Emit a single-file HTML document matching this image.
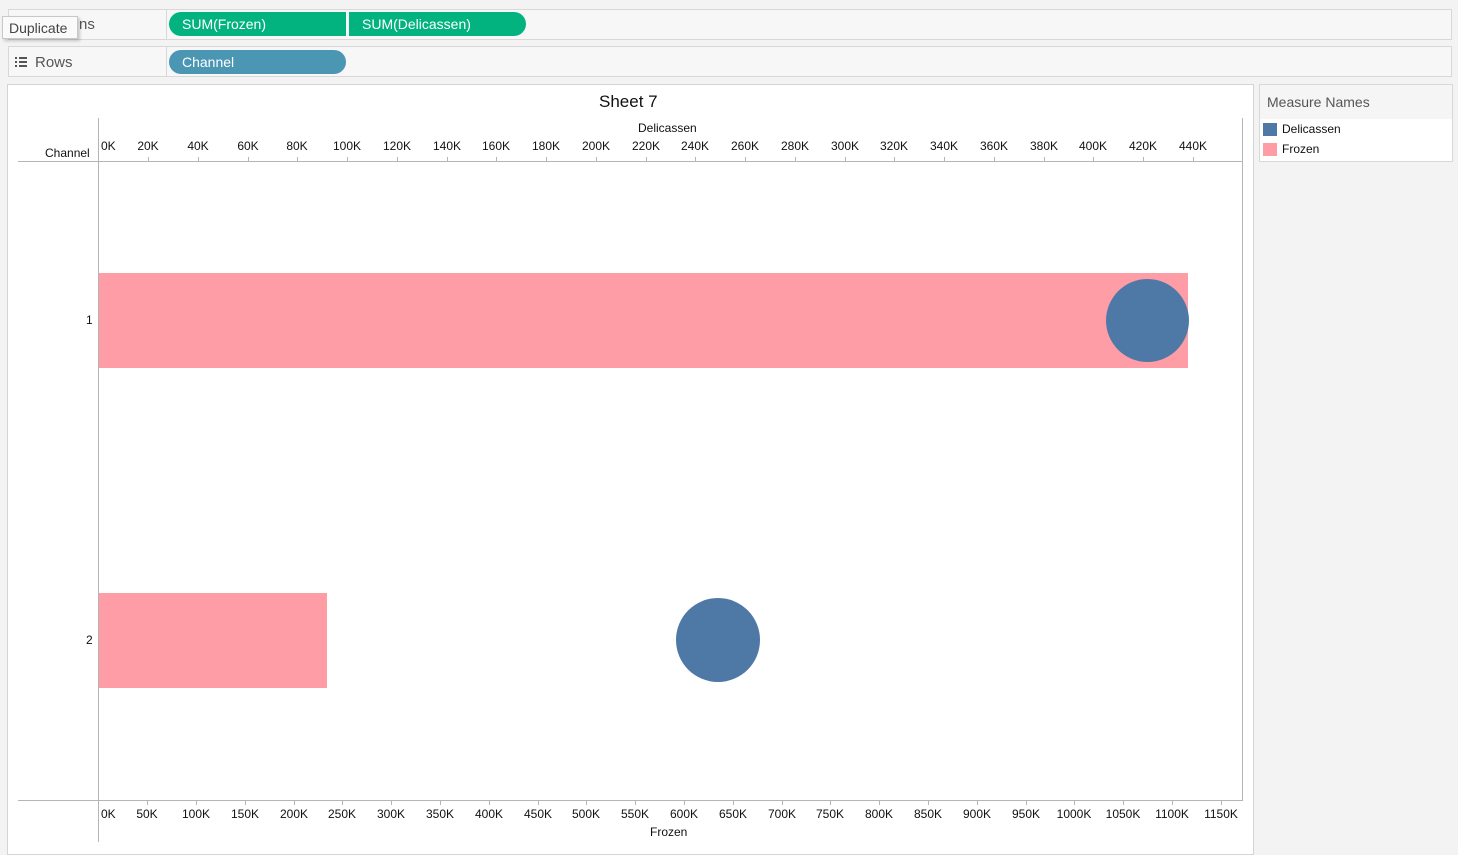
<!DOCTYPE html>
<html><head><meta charset="utf-8"><style>
body{margin:0;width:1458px;height:855px;background:#f3f3f3;font-family:"Liberation Sans",sans-serif;position:relative;overflow:hidden}
.a{position:absolute}
.t{position:absolute;font-size:12px;color:#111;transform:translateX(-50%);white-space:nowrap}
.tk{position:absolute;width:1px;height:4px;background:#b5b5b5}
.pill{position:absolute;height:24px;border-radius:12px;color:#fff;font-size:14px;line-height:24px;padding-left:13px;box-sizing:border-box}
.ln{position:absolute;left:15px;width:12px;height:2px;background:#555}
.dt{position:absolute;left:15px;width:2px;height:2px;background:#555}
</style></head><body>
<div class="a" style="left:8px;top:9px;width:1442px;height:29px;border:1px solid #d8d8d8;background:#f7f7f7"></div>
<div class="a" style="left:166px;top:9px;width:1px;height:31px;background:#d8d8d8"></div>
<div class="a" style="left:8px;top:46px;width:1442px;height:29px;border:1px solid #d8d8d8;background:#f7f7f7"></div>
<div class="a" style="left:166px;top:46px;width:1px;height:31px;background:#d8d8d8"></div>
<div class="a" style="left:79px;top:16px;font-size:15px;color:#555">ns</div>
<div class="a" style="left:2px;top:16px;width:76px;height:23px;background:#fafafa;border:1px solid #c8c8c8;box-shadow:2px 2px 3px rgba(0,0,0,.2);font-size:14px;color:#444;line-height:23px;padding-left:6px;box-sizing:border-box">Duplicate</div>
<div class="a" style="left:15px;top:57px;width:2px;height:2px;background:#555"></div>
<div class="a" style="left:19px;top:57px;width:8px;height:2px;background:#555"></div>
<div class="a" style="left:15px;top:61px;width:2px;height:2px;background:#555"></div>
<div class="a" style="left:19px;top:61px;width:8px;height:2px;background:#555"></div>
<div class="a" style="left:15px;top:65px;width:2px;height:2px;background:#555"></div>
<div class="a" style="left:19px;top:65px;width:8px;height:2px;background:#555"></div>
<div class="a" style="left:35px;top:54px;font-size:15px;color:#555">Rows</div>
<div class="pill" style="left:169px;top:12px;width:177px;background:#02b37f;border-radius:12px 0 0 12px">SUM(Frozen)</div>
<div class="pill" style="left:349px;top:12px;width:177px;background:#02b37f;border-radius:0 12px 12px 0">SUM(Delicassen)</div>
<div class="pill" style="left:169px;top:50px;width:177px;background:#4a96b3">Channel</div>

<div class="a" style="left:7px;top:84px;width:1245px;height:769px;background:#fff;border:1px solid #d4d4d4"></div>
<div class="a" style="left:1259px;top:84px;width:192px;height:76px;background:#fff;border:1px solid #d8d8d8"></div>
<div class="a" style="left:1260px;top:85px;width:192px;height:34px;background:#f5f5f5"></div>
<div class="a" style="left:1267px;top:94px;font-size:14px;color:#555">Measure Names</div>
<div class="a" style="left:1263px;top:123px;width:14px;height:13px;background:#4e79a7"></div>
<div class="a" style="left:1282px;top:122px;font-size:12px;color:#111">Delicassen</div>
<div class="a" style="left:1263px;top:143px;width:14px;height:13px;background:#ff9da7"></div>
<div class="a" style="left:1282px;top:142px;font-size:12px;color:#111">Frozen</div>

<div class="a" style="left:599px;top:92px;font-size:17px;color:#111">Sheet 7</div>
<div class="a" style="left:638px;top:121px;font-size:12px;color:#111">Delicassen</div>
<div class="a" style="left:45px;top:146px;font-size:12px;color:#111">Channel</div>
<div class="a" style="left:650px;top:825px;font-size:12px;color:#111">Frozen</div>

<div class="a" style="left:18px;top:161px;width:1225px;height:1px;background:#b5b5b5"></div>
<div class="a" style="left:18px;top:800px;width:1225px;height:1px;background:#b5b5b5"></div>
<div class="a" style="left:98px;top:118px;width:1px;height:724px;background:#b5b5b5"></div>
<div class="a" style="left:1242px;top:118px;width:1px;height:683px;background:#b5b5b5"></div>

<div class="a" style="left:99px;top:273px;width:1089px;height:95px;background:#ff9da7"></div>
<div class="a" style="left:99px;top:593px;width:228px;height:95px;background:#ff9da7"></div>
<div class="a" style="left:1106px;top:279px;width:83px;height:83px;border-radius:50%;background:#4e79a7"></div>
<div class="a" style="left:676px;top:598px;width:84px;height:84px;border-radius:50%;background:#4e79a7"></div>
<div class="a" style="left:86px;top:313px;font-size:12px;color:#111">1</div>
<div class="a" style="left:86px;top:633px;font-size:12px;color:#111">2</div>

<div class="a" style="left:101px;top:139px;font-size:12px;color:#111">0K</div>
<div class="t" style="left:148px;top:139px">20K</div><div class="t" style="left:198px;top:139px">40K</div><div class="t" style="left:248px;top:139px">60K</div><div class="t" style="left:297px;top:139px">80K</div><div class="t" style="left:347px;top:139px">100K</div><div class="t" style="left:397px;top:139px">120K</div><div class="t" style="left:447px;top:139px">140K</div><div class="t" style="left:496px;top:139px">160K</div><div class="t" style="left:546px;top:139px">180K</div><div class="t" style="left:596px;top:139px">200K</div><div class="t" style="left:646px;top:139px">220K</div><div class="t" style="left:695px;top:139px">240K</div><div class="t" style="left:745px;top:139px">260K</div><div class="t" style="left:795px;top:139px">280K</div><div class="t" style="left:845px;top:139px">300K</div><div class="t" style="left:894px;top:139px">320K</div><div class="t" style="left:944px;top:139px">340K</div><div class="t" style="left:994px;top:139px">360K</div><div class="t" style="left:1044px;top:139px">380K</div><div class="t" style="left:1093px;top:139px">400K</div><div class="t" style="left:1143px;top:139px">420K</div><div class="t" style="left:1193px;top:139px">440K</div>
<div class="tk" style="left:148px;top:157px"></div><div class="tk" style="left:198px;top:157px"></div><div class="tk" style="left:248px;top:157px"></div><div class="tk" style="left:297px;top:157px"></div><div class="tk" style="left:347px;top:157px"></div><div class="tk" style="left:397px;top:157px"></div><div class="tk" style="left:447px;top:157px"></div><div class="tk" style="left:496px;top:157px"></div><div class="tk" style="left:546px;top:157px"></div><div class="tk" style="left:596px;top:157px"></div><div class="tk" style="left:646px;top:157px"></div><div class="tk" style="left:695px;top:157px"></div><div class="tk" style="left:745px;top:157px"></div><div class="tk" style="left:795px;top:157px"></div><div class="tk" style="left:845px;top:157px"></div><div class="tk" style="left:894px;top:157px"></div><div class="tk" style="left:944px;top:157px"></div><div class="tk" style="left:994px;top:157px"></div><div class="tk" style="left:1044px;top:157px"></div><div class="tk" style="left:1093px;top:157px"></div><div class="tk" style="left:1143px;top:157px"></div><div class="tk" style="left:1193px;top:157px"></div>

<div class="a" style="left:101px;top:807px;font-size:12px;color:#111">0K</div>
<div class="t" style="left:147px;top:807px">50K</div><div class="t" style="left:196px;top:807px">100K</div><div class="t" style="left:245px;top:807px">150K</div><div class="t" style="left:294px;top:807px">200K</div><div class="t" style="left:342px;top:807px">250K</div><div class="t" style="left:391px;top:807px">300K</div><div class="t" style="left:440px;top:807px">350K</div><div class="t" style="left:489px;top:807px">400K</div><div class="t" style="left:538px;top:807px">450K</div><div class="t" style="left:586px;top:807px">500K</div><div class="t" style="left:635px;top:807px">550K</div><div class="t" style="left:684px;top:807px">600K</div><div class="t" style="left:733px;top:807px">650K</div><div class="t" style="left:782px;top:807px">700K</div><div class="t" style="left:830px;top:807px">750K</div><div class="t" style="left:879px;top:807px">800K</div><div class="t" style="left:928px;top:807px">850K</div><div class="t" style="left:977px;top:807px">900K</div><div class="t" style="left:1026px;top:807px">950K</div><div class="t" style="left:1074px;top:807px">1000K</div><div class="t" style="left:1123px;top:807px">1050K</div><div class="t" style="left:1172px;top:807px">1100K</div><div class="t" style="left:1221px;top:807px">1150K</div>
<div class="tk" style="left:147px;top:801px"></div><div class="tk" style="left:196px;top:801px"></div><div class="tk" style="left:245px;top:801px"></div><div class="tk" style="left:294px;top:801px"></div><div class="tk" style="left:342px;top:801px"></div><div class="tk" style="left:391px;top:801px"></div><div class="tk" style="left:440px;top:801px"></div><div class="tk" style="left:489px;top:801px"></div><div class="tk" style="left:538px;top:801px"></div><div class="tk" style="left:586px;top:801px"></div><div class="tk" style="left:635px;top:801px"></div><div class="tk" style="left:684px;top:801px"></div><div class="tk" style="left:733px;top:801px"></div><div class="tk" style="left:782px;top:801px"></div><div class="tk" style="left:830px;top:801px"></div><div class="tk" style="left:879px;top:801px"></div><div class="tk" style="left:928px;top:801px"></div><div class="tk" style="left:977px;top:801px"></div><div class="tk" style="left:1026px;top:801px"></div><div class="tk" style="left:1074px;top:801px"></div><div class="tk" style="left:1123px;top:801px"></div><div class="tk" style="left:1172px;top:801px"></div><div class="tk" style="left:1221px;top:801px"></div>
</body></html>
